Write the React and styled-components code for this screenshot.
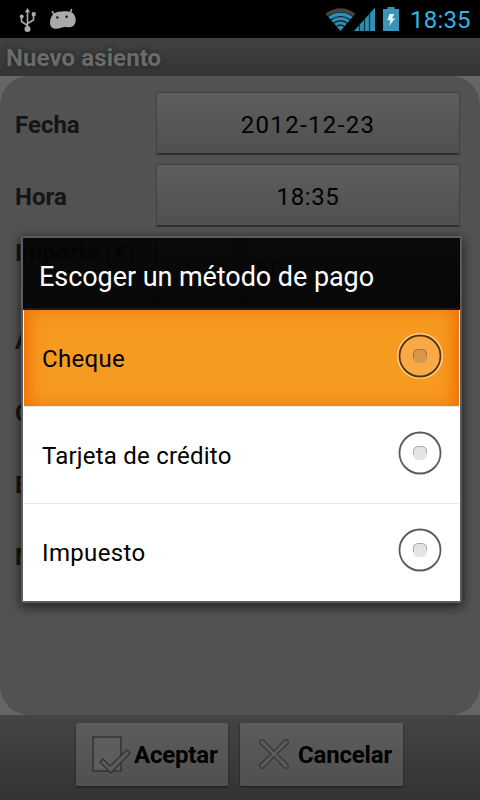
import React from "react";
import styled, { createGlobalStyle } from "styled-components";

const GlobalStyle = createGlobalStyle`
  * { box-sizing: border-box; }
  body { margin: 0; background: #000; font-family: Roboto, "Noto Sans", sans-serif; }
`;

const Screen = styled.div`
  position: relative;
  width: 480px;
  height: 800px;
  overflow: hidden;
  display: flex;
  flex-direction: column;
  background: #666;
`;

const StatusBar = styled.header`
  height: 38px;
  flex: none;
  display: flex;
  align-items: center;
  justify-content: space-between;
  padding: 0 9px 0 19px;
  background: #000;
`;

const IconGroup = styled.div`
  display: flex;
  align-items: center;
`;

const Clock = styled.span`
  width: 61px;
  margin-left: 11px;
  color: #33b5e5;
  font-size: 24px;
  line-height: 38px;
  letter-spacing: 0.2px;
  white-space: nowrap;
  padding-top: 2px;
`;

const TitleBar = styled.div`
  height: 38px;
  flex: none;
  padding-left: 6px;
  background: linear-gradient(#414141, #343434);
  color: #6b6b6b;
  font-size: 24px;
  font-weight: 700;
  line-height: 40px;
  letter-spacing: 0.1px;
  text-shadow: 0 0 4px #222;
`;

const Form = styled.main`
  height: 639px;
  flex: none;
  display: flex;
  flex-direction: column;
  gap: 8px;
  padding: 16px 20px 0 15px;
  border-radius: 29px;
  background: #525252;
`;

const Row = styled.div`
  height: 64px;
  flex: none;
  display: flex;
  align-items: ${(p) => (p.$top ? "flex-start" : "center")};
  gap: 6px;
`;

const Label = styled.label`
  width: 135px;
  flex: none;
  color: #151515;
  font-size: 24px;
  font-weight: 700;
  line-height: 34px;
  letter-spacing: ${(p) => (p.$raised ? "-0.15px" : "0")};
  white-space: nowrap;
  padding-top: ${(p) => (p.$raised ? "0" : "2px")};
`;

const Field = styled.button`
  flex: ${(p) => (p.$width ? "none" : 1)};
  width: ${(p) => p.$width || "auto"};
  height: 63px;
  margin-bottom: 1px;
  padding: 4px 0 0;
  border: 1px solid #414141;
  border-bottom: 2px solid #303030;
  border-radius: 2px;
  background: linear-gradient(#5e5e5e, #505050);
  color: #000;
  font: 400 24px Roboto, sans-serif;
  letter-spacing: ${(p) => p.$spacing || "0.6px"};
  text-align: ${(p) => p.$align || "center"};
  text-indent: ${(p) => (p.$align ? "12px" : "0")};
`;

const Footer = styled.footer`
  height: 85px;
  flex: none;
  display: flex;
  gap: 12px;
  padding: 8px 0 0 76px;
  background: linear-gradient(#444, #333);
`;

const Action = styled.button`
  width: ${(p) => p.$width};
  height: 63px;
  display: flex;
  align-items: center;
  gap: ${(p) => p.$gap};
  padding: 0 0 0 ${(p) => p.$inset};
  border: 0;
  border-radius: 2px;
  background: linear-gradient(#5c5c5c, #505050);
  box-shadow: 0 1px 2px #161616, inset 0 0 1px #656565;
  color: #000;
  font: 700 24px Roboto, sans-serif;
  letter-spacing: -0.18px;
  white-space: nowrap;
`;

const Dialog = styled.section`
  position: absolute;
  left: 21px;
  top: 236px;
  width: 441px;
  height: 367px;
  display: flex;
  flex-direction: column;
  border: 2px solid #5c5c5c;
  border-radius: 3px;
  box-shadow: 0 3px 11px 1px rgba(0, 0, 0, 0.6);
`;

const DialogTitle = styled.h1`
  height: 72px;
  flex: none;
  margin: 0;
  padding-left: 16px;
  border-bottom: 2px solid #1a1a1a;
  background: linear-gradient(rgba(3, 3, 3, 0.92), rgba(3, 3, 3, 0.94));
  color: #fff;
  font-size: 27px;
  font-weight: 400;
  line-height: 79px;
  letter-spacing: -0.06px;
  white-space: nowrap;
`;

const Options = styled.div`
  flex: 1;
  padding: 0 1px;
  background: #fff;
`;

const Option = styled.div`
  height: 97px;
  display: flex;
  align-items: center;
  justify-content: space-between;
  padding: 0 16px 0 18px;
  border-bottom: 1px solid ${(p) => (p.$last ? "#fff" : "#e6e6e6")};
  background: ${(p) => (p.$active ? "#f79a20" : "#fff")};
  box-shadow: ${(p) =>
    p.$active
      ? "inset 14px 0 18px -12px #ef6800, inset -14px 0 18px -12px #ef6800, inset 0 0 20px #f2851a"
      : "none"};
  background-clip: padding-box;
  color: #000;
  font-size: 24px;
  letter-spacing: ${(p) => p.$spacing};
`;

const OptionText = styled.span`
  padding-top: 2px;
`;

const RadioSvg = styled.svg`
  display: block;
  margin-bottom: 5px;
`;

const Spaced = styled.svg`
  display: block;
  flex: none;
  margin-left: ${(p) => p.$left || "0"};
  margin-top: ${(p) => p.$top || "0"};
`;

function UsbIcon() {
  return (
    <Spaced width="18" height="26" viewBox="0 0 18 26" $top="1px" fill="#aaa">
      <path d="M8.5 21V5M8.5 18.5L2.5 14.5V9M8.5 16.5l6-3.5V7" fill="none" stroke="#aaa" strokeWidth="1.6" />
      <path d="M5.8 5.2L8.5 1 11.2 5.2z" />
      <circle cx="8.5" cy="22" r="3" />
      <circle cx="2.7" cy="9.5" r="2" />
      <path d="M12.8 5.2h3.8v3.9h-3.8z" />
    </Spaced>
  );
}

function RobotIcon() {
  return (
    <Spaced width="28" height="22" viewBox="0 0 28 22" $left="12px">
      <path d="M5 6.2L3.3 3.6M21.5 4.5L22.5 1.5" stroke="#aaa" strokeWidth="1.6" strokeLinecap="round" />
      <path d="M5 5.5C9 2.8 19 2.6 22.8 4.4C26.4 6.4 27.2 11 26.5 14.3C25.4 18.6 21.5 19.6 18 19.2C15.5 18.9 13.5 19.4 11.5 20C7 21.6 1.6 20.8 1.1 16C.8 12 1.8 8 5 5.5Z" fill="#aaa" />
      <circle cx="8.4" cy="9.4" r="1.2" fill="#111" />
      <circle cx="17.6" cy="8.8" r="1.2" fill="#111" />
    </Spaced>
  );
}

function WifiIcon() {
  return (
    <Spaced width="31" height="24" viewBox="0 0 31 24" $top="-1px">
      <path d="M0.5 6.8Q15.5-4.2 30.5 6.8L28.2 9.5Q15.5.5 2.8 9.5Z" fill="#444" />
      <path d="M3.2 9.8Q15.5 1.2 27.8 9.8L15.5 24Z" fill="#308fb3" />
      <path d="M5.5 13Q15.5 6 25.5 13M8.5 16.2Q15.5 11.5 22.5 16.2M11.5 19.4Q15.5 16.8 19.5 19.4" stroke="#05141a" strokeWidth="1.2" fill="none" />
    </Spaced>
  );
}

function SignalIcon() {
  return (
    <Spaced width="22" height="24" viewBox="0 0 22 24" $left="-2px" $top="-1px">
      <path d="M0 24L21 .5V24Z" fill="#308fb3" />
      <path d="M5.5 18v6M10.5 12v12M15.5 6v18" stroke="#0c2b36" strokeWidth="1.2" />
    </Spaced>
  );
}

function BatteryIcon() {
  return (
    <Spaced width="16" height="24" viewBox="0 0 16 24" $left="7px" $top="-1px">
      <path d="M4.5 0h7v2H16v22H0V2h4.5z" fill="#3994b5" />
      <path d="M6.5 7h4.8L9 11.2h3.2L6 19l1.5-5.8H4.3z" fill="#e6f4f8" />
    </Spaced>
  );
}

function CheckIcon() {
  return (
    <Spaced width="40" height="38" viewBox="0 0 40 38" $top="1px">
      <path d="M1 1h28v34H1z" fill="#5d5d5d" stroke="#333" strokeWidth="1.5" />
      <path d="M8 26l3-3 7 7 17-16 3 3-19 20z" fill="#5c5c5c" stroke="#333" strokeWidth="1.4" strokeLinejoin="round" />
    </Spaced>
  );
}

function CrossIcon() {
  return (
    <Spaced width="30" height="30" viewBox="0 0 30 30" $top="-1px">
      <path
        d="M15 12.2L25.2 1.5Q27-.1 28.6 1.5T28.4 5L17.8 15L28.4 25Q30.1 26.8 28.6 28.5T25.2 28.5L15 17.8L4.8 28.5Q3 30.1 1.4 28.5T1.6 25L12.2 15L1.6 5Q-.1 3.2 1.4 1.5T4.8 1.5Z"
        fill="#5c5c5c"
        stroke="#383838"
        strokeWidth="1.3"
      />
    </Spaced>
  );
}

function Radio({ active }) {
  return (
    <RadioSvg width="46" height="46" viewBox="0 0 46 46">
      {active && <circle cx="23" cy="23" r="22" fill="#f9aa47" stroke="#ffd08c" strokeWidth="2" />}
      <circle cx="23" cy="23" r="20.5" fill="none" stroke={active ? "#5d3407" : "#5a5a5a"} strokeWidth="1.8" />
      <rect x="16" y="16" width="14" height="14" rx="5.5" fill={active ? "#d6994c" : "#e4e4e4"} />
      <path
        d="M16.5 25v-3.5q0-5 5-5h3q5 0 5 5v2"
        fill="none"
        stroke={active ? "#a0702f" : "#a6a6a6"}
        strokeWidth="1"
      />
    </RadioSvg>
  );
}

const options = [
  { name: "Cheque", spacing: "0.3px", active: true },
  { name: "Tarjeta de crédito", spacing: "0.22px" },
  { name: "Impuesto", spacing: "0.35px" },
];

export default function App() {
  return (
    <Screen>
      <GlobalStyle />
      <StatusBar>
        <IconGroup>
          <UsbIcon />
          <RobotIcon />
        </IconGroup>
        <IconGroup>
          <WifiIcon />
          <SignalIcon />
          <BatteryIcon />
          <Clock>18:35</Clock>
        </IconGroup>
      </StatusBar>
      <TitleBar>Nuevo asiento</TitleBar>
      <Form>
        <Row>
          <Label>Fecha</Label>
          <Field $spacing="1.35px">2012-12-23</Field>
        </Row>
        <Row>
          <Label>Hora</Label>
          <Field>18:35</Field>
        </Row>
        <Row $top>
          <Label $raised>Importe (€)</Label>
          <Field $width="81px">-</Field>
          <Field $align="left">50</Field>
        </Row>
        {["A", "C", "E", "M"].map((text) => (
          <Row key={text}>
            <Label>{text}</Label>
          </Row>
        ))}
      </Form>
      <Footer>
        <Action $width="152px" $inset="16px" $gap="2px">
          <CheckIcon />
          Aceptar
        </Action>
        <Action $width="163px" $inset="19px" $gap="9px">
          <CrossIcon />
          Cancelar
        </Action>
      </Footer>
      <Dialog>
        <DialogTitle>Escoger un método de pago</DialogTitle>
        <Options>
          {options.map((o, i) => (
            <Option key={o.name} $active={o.active} $last={i === 2} $spacing={o.spacing}>
              <OptionText>{o.name}</OptionText>
              <Radio active={o.active} />
            </Option>
          ))}
        </Options>
      </Dialog>
    </Screen>
  );
}
